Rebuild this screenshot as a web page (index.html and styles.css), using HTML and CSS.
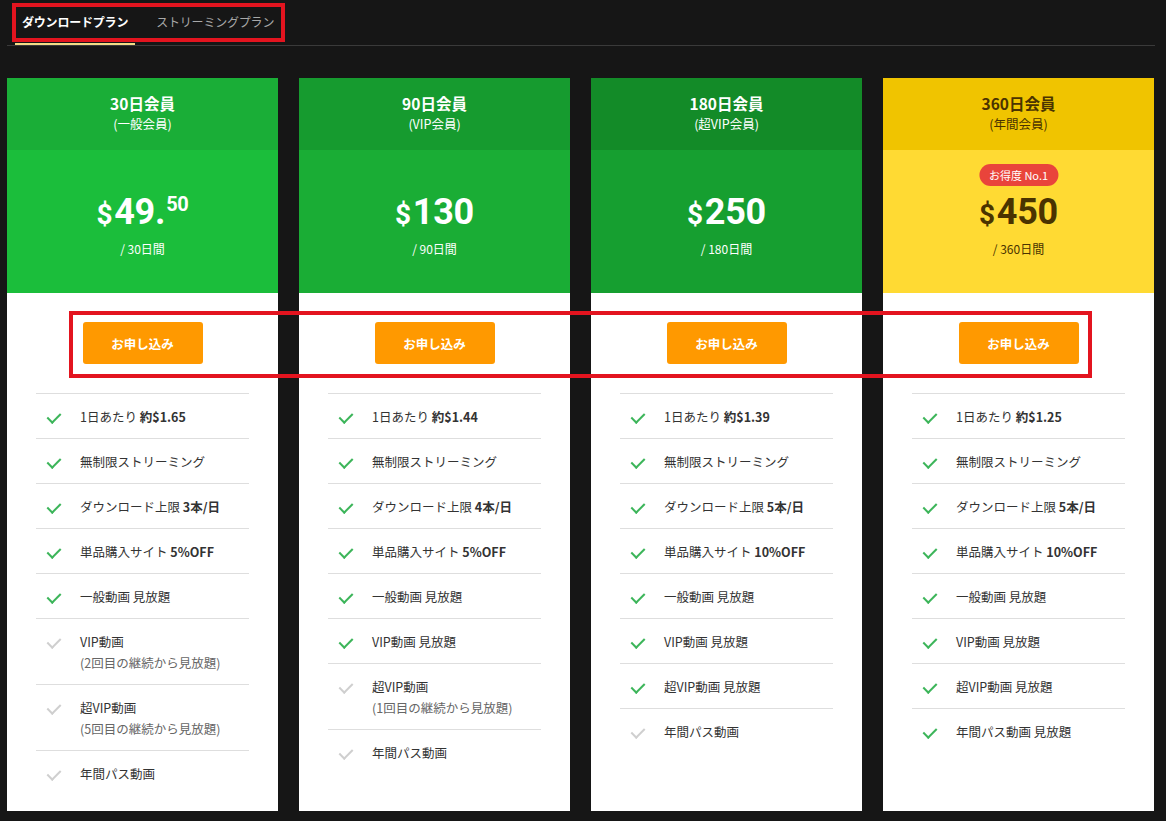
FILE: index.html
```html
<!DOCTYPE html>
<html lang="ja">
<head>
<meta charset="utf-8">
<link rel="stylesheet" href="styles.css">
</head>
<body>
<div class="page">
  <nav class="tabs">
    <a class="tab active">ダウンロードプラン</a>
    <a class="tab">ストリーミングプラン</a>
    <div class="hl hl-tabs"></div>
  </nav>

  <div class="plans">
    <div class="hl hl-buttons"></div>

    <section class="card c1">
      <header class="card-head">
        <div class="title">30日会員</div>
        <div class="sub">(一般会員)</div>
      </header>
      <div class="price-box">
        <div class="price"><span class="cur">$</span>49.<sup>50</sup></div>
        <div class="per">/ 30日間</div>
      </div>
      <div class="btn-wrap"><a class="btn">お申し込み</a></div>
      <ul class="features">
        <li><span class="ic on"></span><span>1日あたり <b>約$1.65</b></span></li>
        <li><span class="ic on"></span><span>無制限ストリーミング</span></li>
        <li><span class="ic on"></span><span>ダウンロード上限 <b>3本/日</b></span></li>
        <li><span class="ic on"></span><span>単品購入サイト <b>5%OFF</b></span></li>
        <li><span class="ic on"></span><span>一般動画 見放題</span></li>
        <li><span class="ic off"></span><span>VIP動画<br><span class="note">(2回目の継続から見放題)</span></span></li>
        <li><span class="ic off"></span><span>超VIP動画<br><span class="note">(5回目の継続から見放題)</span></span></li>
        <li><span class="ic off"></span><span>年間パス動画</span></li>
      </ul>
    </section>

    <section class="card c2">
      <header class="card-head">
        <div class="title">90日会員</div>
        <div class="sub">(VIP会員)</div>
      </header>
      <div class="price-box">
        <div class="price"><span class="cur">$</span>130</div>
        <div class="per">/ 90日間</div>
      </div>
      <div class="btn-wrap"><a class="btn">お申し込み</a></div>
      <ul class="features">
        <li><span class="ic on"></span><span>1日あたり <b>約$1.44</b></span></li>
        <li><span class="ic on"></span><span>無制限ストリーミング</span></li>
        <li><span class="ic on"></span><span>ダウンロード上限 <b>4本/日</b></span></li>
        <li><span class="ic on"></span><span>単品購入サイト <b>5%OFF</b></span></li>
        <li><span class="ic on"></span><span>一般動画 見放題</span></li>
        <li><span class="ic on"></span><span>VIP動画 見放題</span></li>
        <li><span class="ic off"></span><span>超VIP動画<br><span class="note">(1回目の継続から見放題)</span></span></li>
        <li><span class="ic off"></span><span>年間パス動画</span></li>
      </ul>
    </section>

    <section class="card c3">
      <header class="card-head">
        <div class="title">180日会員</div>
        <div class="sub">(超VIP会員)</div>
      </header>
      <div class="price-box">
        <div class="price"><span class="cur">$</span>250</div>
        <div class="per">/ 180日間</div>
      </div>
      <div class="btn-wrap"><a class="btn">お申し込み</a></div>
      <ul class="features">
        <li><span class="ic on"></span><span>1日あたり <b>約$1.39</b></span></li>
        <li><span class="ic on"></span><span>無制限ストリーミング</span></li>
        <li><span class="ic on"></span><span>ダウンロード上限 <b>5本/日</b></span></li>
        <li><span class="ic on"></span><span>単品購入サイト <b>10%OFF</b></span></li>
        <li><span class="ic on"></span><span>一般動画 見放題</span></li>
        <li><span class="ic on"></span><span>VIP動画 見放題</span></li>
        <li><span class="ic on"></span><span>超VIP動画 見放題</span></li>
        <li><span class="ic off"></span><span>年間パス動画</span></li>
      </ul>
    </section>

    <section class="card c4">
      <header class="card-head">
        <div class="title">360日会員</div>
        <div class="sub">(年間会員)</div>
      </header>
      <div class="price-box">
        <span class="badge">お得度 No.1</span>
        <div class="price"><span class="cur">$</span>450</div>
        <div class="per">/ 360日間</div>
      </div>
      <div class="btn-wrap"><a class="btn">お申し込み</a></div>
      <ul class="features">
        <li><span class="ic on"></span><span>1日あたり <b>約$1.25</b></span></li>
        <li><span class="ic on"></span><span>無制限ストリーミング</span></li>
        <li><span class="ic on"></span><span>ダウンロード上限 <b>5本/日</b></span></li>
        <li><span class="ic on"></span><span>単品購入サイト <b>10%OFF</b></span></li>
        <li><span class="ic on"></span><span>一般動画 見放題</span></li>
        <li><span class="ic on"></span><span>VIP動画 見放題</span></li>
        <li><span class="ic on"></span><span>超VIP動画 見放題</span></li>
        <li><span class="ic on"></span><span>年間パス動画 見放題</span></li>
      </ul>
    </section>
  </div>
</div>
</body>
</html>
```

FILE: styles.css
```css
* { box-sizing: border-box; }
html, body { margin: 0; padding: 0; background: #161616; }
body {
  font-family: "Noto Sans CJK JP", "Noto Sans", sans-serif;
  color: #333;
  width: 1166px;
  height: 821px;
  overflow: hidden;
}
.page { padding: 0 11px 0 7px; }

.tabs {
  position: relative;
  display: flex;
  gap: 14px;
  height: 46px;
  padding-left: 8px;
  border-bottom: 1px solid #3a3a3a;
}
.tab {
  display: flex;
  align-items: center;
  height: 45px;
  padding: 0 7px 2px;
  font-size: 12px;
  color: #a8a8a8;
  letter-spacing: -0.2px;
}
.tab.active {
  color: #fff;
  font-weight: bold;
  box-shadow: inset 0 -2px 0 #f3dc86;
}

.hl {
  position: absolute;
  border: 4px solid #e3141f;
  pointer-events: none;
  z-index: 5;
}
.hl-tabs { left: 5px; top: 3px; width: 273px; height: 39px; }
.hl-buttons { left: 62px; top: 233px; width: 1023px; height: 67px; }

.plans {
  position: relative;
  margin-top: 32px;
  display: grid;
  grid-template-columns: repeat(4, 271px);
  gap: 21px;
  height: 733px;
}
.card {
  background: #fff;
  display: flex;
  flex-direction: column;
}
.card-head {
  height: 72px;
  display: flex;
  flex-direction: column;
  align-items: center;
  justify-content: center;
  color: #fff;
}
.title { font-size: 15.5px; font-weight: bold; line-height: 20px; }
.sub { font-size: 12.5px; line-height: 22px; }

.price-box {
  position: relative;
  height: 143px;
  display: flex;
  flex-direction: column;
  align-items: center;
  justify-content: center;
  color: #fff;
  padding-top: 4px;
}
.price {
  font-family: Roboto, "Liberation Sans", sans-serif;
  font-weight: bold;
  font-size: 36px;
  line-height: 44px;
  letter-spacing: -0.3px;
}
.price .cur { font-size: 28px; margin-right: 2px; }
.price sup {
  font-size: 20px;
  vertical-align: top;
  position: relative;
  top: 4px;
  line-height: 1;
  margin-left: 1px;
}
.per { font-size: 12px; line-height: 18px; margin-top: 3px; }

.badge {
  position: absolute;
  top: 14px;
  left: 50%;
  transform: translateX(-50%);
  background: #e9443b;
  color: #fff;
  font-size: 11px;
  line-height: 22px;
  height: 22px;
  padding: 0 10px;
  border-radius: 11px;
  white-space: nowrap;
}

.c1 .card-head { background: #1aae37; }
.c1 .price-box { background: #1bbe3b; }
.c2 .card-head { background: #169b2f; }
.c2 .price-box { background: #1aad35; }
.c3 .card-head { background: #138b28; }
.c3 .price-box { background: #169f30; }
.c4 .card-head { background: #f0c400; color: #4a3300; }
.c4 .price-box { background: #ffda33; color: #4a3300; }

.btn-wrap {
  display: flex;
  justify-content: center;
  padding: 29px 0;
}
.btn {
  width: 120px;
  height: 42px;
  display: flex;
  align-items: center;
  justify-content: center;
  background: #ff9900;
  color: #fff;
  font-weight: bold;
  font-size: 12.5px;
  border-radius: 3px;
}

.features {
  list-style: none;
  margin: 0 29px;
  padding: 0;
}
.features li {
  display: flex;
  align-items: flex-start;
  border-top: 1px solid #dedede;
  padding: 11.5px 0 11.5px;
  font-size: 12.5px;
  line-height: 21px;
  color: #333;
}
.features li b { font-weight: bold; }
.note { color: #666; }
.ic {
  flex: none;
  width: 44px;
  height: 21px;
  position: relative;
}
.ic::after {
  content: "";
  position: absolute;
  left: 14px;
  top: 4px;
  width: 6px;
  height: 11px;
  border-right: 2px solid #3cb55a;
  border-bottom: 2px solid #3cb55a;
  transform: rotate(45deg);
}
.ic.off::after { border-color: #cfcfcf; }
```
